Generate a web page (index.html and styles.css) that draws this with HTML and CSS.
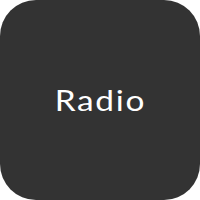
FILE: index.html
```html
<!DOCTYPE html>
<html>
<head>
<meta charset="utf-8">
<link rel="stylesheet" href="styles.css">
</head>
<body>
<div class="tile">
  <span class="label">Radio</span>
</div>
</body>
</html>
```
FILE: styles.css
```css
html, body {
  margin: 0;
  padding: 0;
  background: #ffffff;
}
.tile {
  width: 200px;
  height: 200px;
  border-radius: 36px;
  background: #333333;
  display: flex;
  align-items: center;
  justify-content: center;
}
.label {
  display: block;
  font-family: "Lato", "Liberation Sans", sans-serif;
  font-size: 29px;
  font-weight: 400;
  letter-spacing: 1.5px;
  color: #ffffff;
  line-height: 1;
  padding-left: 1.5px;
  padding-bottom: 1px;
  transform: scaleX(1.15);
}
```
